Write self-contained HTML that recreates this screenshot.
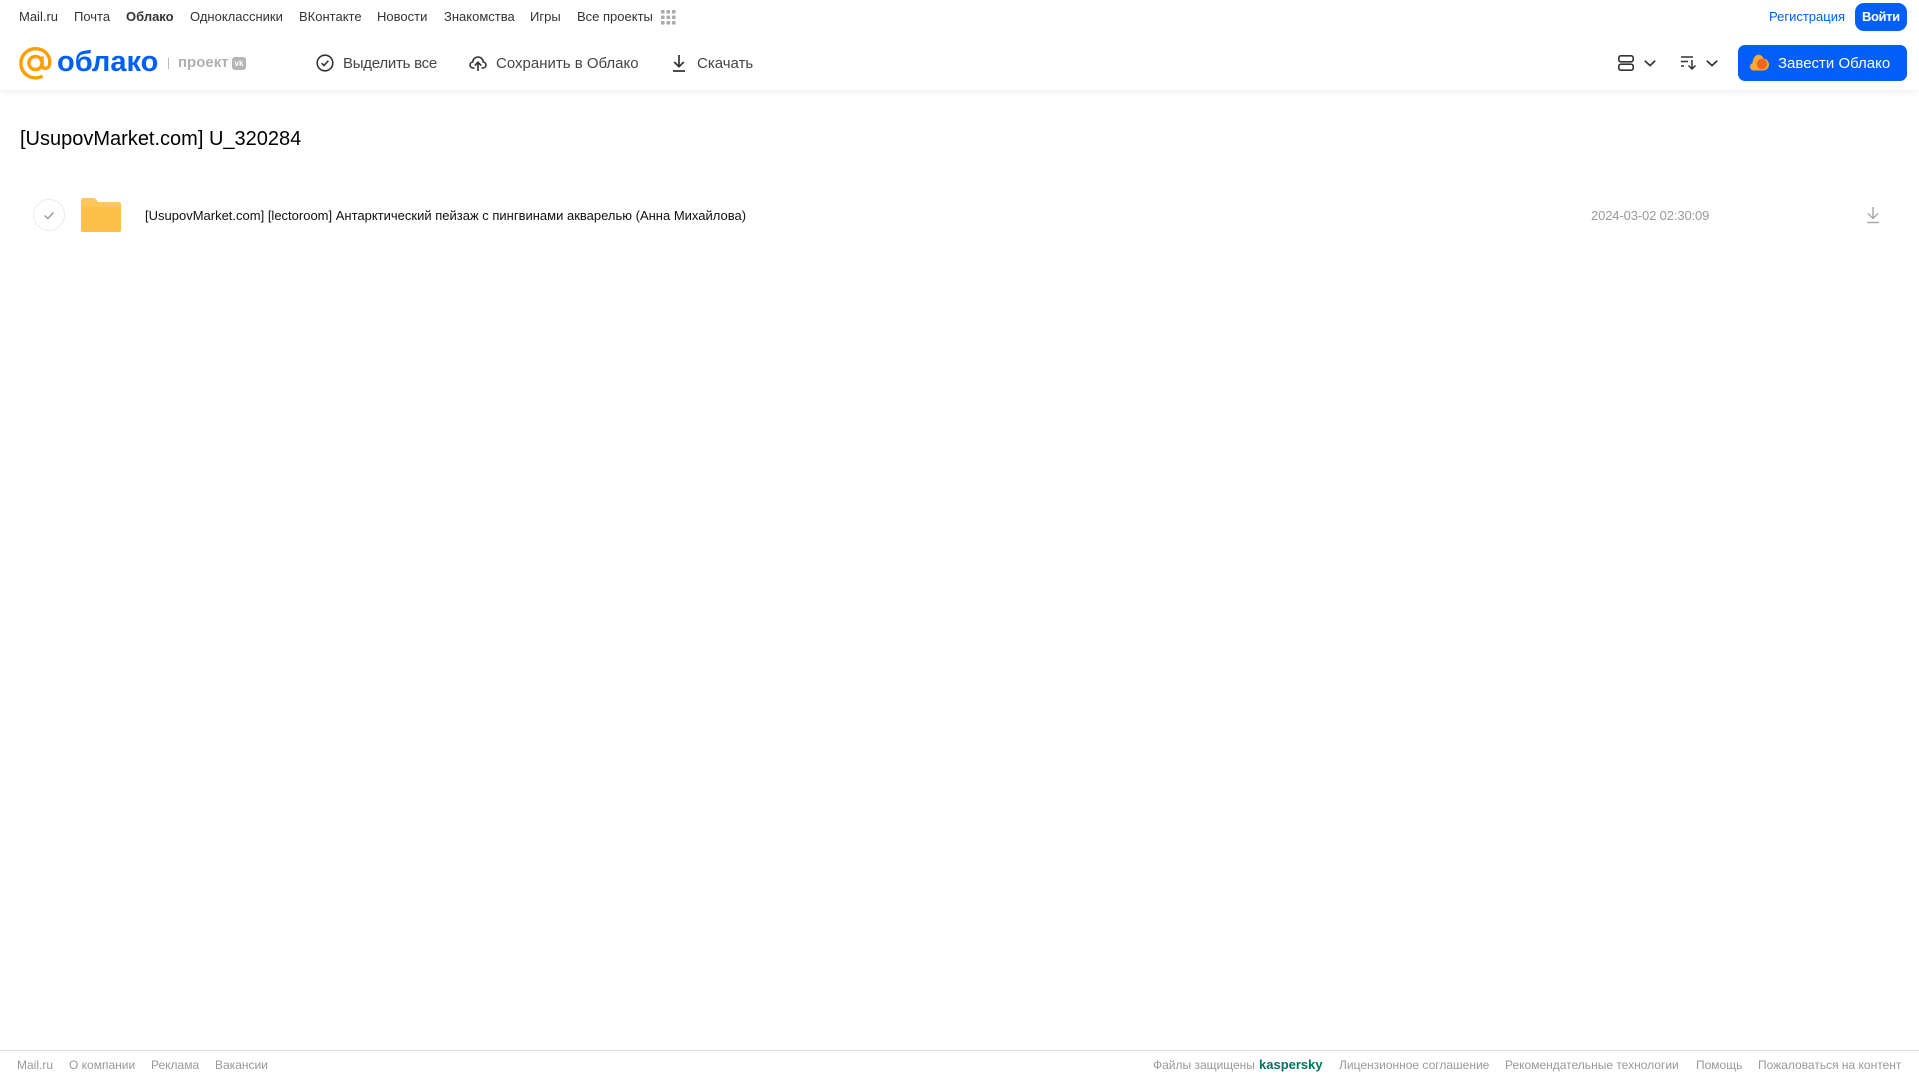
<!DOCTYPE html>
<html lang="ru"><head><meta charset="utf-8"><title>Облако</title>
<style>
html,body{margin:0;padding:0;background:#fff;width:1919px;height:1079px;overflow:hidden;font-family:"Liberation Sans",Arial,sans-serif}
.t{position:absolute;white-space:nowrap;line-height:20px}
.n{top:7px;font-size:13px;color:#333}
.m{top:54px;font-size:15px;color:#444}
.f{top:1055px;font-size:12px;color:#999}
svg{position:absolute;overflow:visible}
#hd{position:absolute;left:0;top:0;width:1919px;height:90px;background:#fff;box-shadow:0 1px 8px rgba(0,0,0,.08)}
</style></head><body>
<div id="hd"></div>
<span class="t n" style="left:19px">Mail.ru</span>
<span class="t n" style="left:74px">Почта</span>
<span class="t n" style="left:126px;font-weight:bold">Облако</span>
<span class="t n" style="left:190px">Одноклассники</span>
<span class="t n" style="left:299px">ВКонтакте</span>
<span class="t n" style="left:377px">Новости</span>
<span class="t n" style="left:444px">Знакомства</span>
<span class="t n" style="left:530px">Игры</span>
<span class="t n" style="left:577px">Все проекты</span>
<svg style="left:661px;top:10px" width="15" height="15" fill="#aaa"><rect x="0" y="0" width="3.6" height="3.6" rx="1"/><rect x="5.5" y="0" width="3.6" height="3.6" rx="1"/><rect x="11" y="0" width="3.6" height="3.6" rx="1"/><rect x="0" y="5.5" width="3.6" height="3.6" rx="1"/><rect x="5.5" y="5.5" width="3.6" height="3.6" rx="1"/><rect x="11" y="5.5" width="3.6" height="3.6" rx="1"/><rect x="0" y="11" width="3.6" height="3.6" rx="1"/><rect x="5.5" y="11" width="3.6" height="3.6" rx="1"/><rect x="11" y="11" width="3.6" height="3.6" rx="1"/></svg>
<span class="t n" style="left:1769px;color:#005ff9">Регистрация</span>
<div style="position:absolute;left:1855px;top:3px;width:52px;height:28px;border-radius:9px;background:#005ff9"></div>
<span class="t n" style="left:1862px;color:#fff;font-weight:bold;letter-spacing:-.4px">Войти</span>

<svg style="left:19px;top:47px" width="33" height="33" viewBox="0 0 33 33" fill="none" stroke="#ff9e00" stroke-width="3.4"><circle cx="16.5" cy="16" r="6.6"/><path d="M23.1 9.5V18.5C23.1 22.5 29.8 22.5 30.6 17.5C31.9 8.5 25.5 1.7 16.5 1.7C8.5 1.7 1.9 8.2 1.9 16.2C1.9 24.5 8.5 30.9 16.5 30.9C19.4 30.9 21.6 30.2 23.5 29"/></svg>
<span class="t" style="left:57px;top:44px;font-size:29px;line-height:36px;font-weight:bold;color:#005ff9">облако</span>
<div style="position:absolute;left:168px;top:58px;width:1px;height:11px;background:#bbb"></div>
<span class="t" style="left:178px;top:53px;font-size:15px;font-weight:bold;color:#b0b0b0">проект</span>
<div style="position:absolute;left:232px;top:57px;width:14px;height:13px;border-radius:3px;background:#b5b5b5;color:#fff;font:bold 8px/13px 'Liberation Sans',sans-serif;text-align:center">vk</div>

<svg style="left:316px;top:54px" width="18" height="18" viewBox="0 0 18 18" fill="none" stroke="#333" stroke-width="1.6"><circle cx="9" cy="9" r="7.8"/><path d="M5.6 9.2L8 11.5L12.4 6.7"/></svg>
<span class="t m" style="left:343px;letter-spacing:-.25px">Выделить все</span>
<svg style="left:469px;top:54px" width="18" height="18" viewBox="0 0 18 18" fill="none" stroke="#333" stroke-width="1.6"><path d="M5.5 14H4.2C2.3 14 1 12.6 1 11C1 9.4 2.1 8.2 3.7 8C4 5 6.300 3 9 3C11.700 3 14 5 14.300 8C15.900 8.200 17 9.400 17 11C17 12.600 15.700 14 13.800 14H12.500"/><path d="M9 17V8.500M5.800 11.500L9 8.300L12.200 11.500"/></svg>
<span class="t m" style="left:496px">Сохранить в Облако</span>
<svg style="left:670px;top:54px" width="18" height="18" viewBox="0 0 18 18" fill="none" stroke="#333" stroke-width="1.7"><path d="M9 1V12.500M4.200 8L9 12.700L13.800 8M3 17H15"/></svg>
<span class="t m" style="left:697px">Скачать</span>

<svg style="left:1618px;top:55px" width="16" height="16" viewBox="0 0 16 16" fill="none" stroke="#333" stroke-width="1.6"><rect x=".8" y=".8" width="14.400" height="6" rx="2"/><rect x=".8" y="9.200" width="14.400" height="6" rx="2"/></svg>
<svg style="left:1644px;top:60px" width="12" height="7" viewBox="0 0 12 7" fill="none" stroke="#333" stroke-width="1.7"><path d="M.8 .8L6 5.600L11.200 .8"/></svg>
<svg style="left:1681px;top:56px" width="16" height="14" viewBox="0 0 16 14" fill="none" stroke="#333" stroke-width="1.5"><path d="M0 1H12M0 5.500H7M0 10H3M11 4V13M7.500 9.500L11 13L14.500 9.500"/></svg>
<svg style="left:1706px;top:60px" width="12" height="7" viewBox="0 0 12 7" fill="none" stroke="#333" stroke-width="1.7"><path d="M.8 .8L6 5.600L11.200 .8"/></svg>
<div style="position:absolute;left:1738px;top:45px;width:169px;height:36px;border-radius:7px;background:#005ff9"></div>
<svg style="left:1750px;top:54px" width="19" height="17" viewBox="0 0 19 17"><path d="M4 16.500C1.700 16.500 0 14.800 0 12.700C0 11 1 9.600 2.600 9C2.700 4.500 5.300 .8 8.500 .8C11 .8 12.800 2.500 13.400 4.500C16.500 4.800 19 7.300 19 10.500C19 14 16.200 16.500 13 16.500Z" fill="#ffa930"/><circle cx="12" cy="10" r="5.200" fill="#f0651f"/></svg>
<span class="t m" style="left:1778px;color:#fff">Завести Облако</span>

<span class="t" style="left:20px;top:127px;font-size:20px;line-height:24px;color:#000">[UsupovMarket.com] U_320284</span>

<svg style="left:33px;top:199px" width="32" height="32" viewBox="0 0 32 32" fill="none"><circle cx="16" cy="16" r="15.500" stroke="#ececec"/><path d="M11.500 16.500L14.800 19.500L20.500 13.500" stroke="#999" stroke-width="1.500"/></svg>
<svg style="left:81px;top:198px" width="40" height="34" viewBox="0 0 40 34"><path d="M2 0H12C14 0 15 1 16 2.500L17 4H38C39.200 4 40 4.800 40 6V32C40 33.200 39.200 34 38 34H2C.8 34 0 33.200 0 32V2C0 .8 .8 0 2 0Z" fill="#ffc759"/><path d="M0 8.500H40V32C40 33.200 39.200 34 38 34H2C.8 34 0 33.200 0 32Z" fill="#ffc04a"/></svg>
<span class="t" style="left:145px;top:206px;font-size:13px;color:#111">[UsupovMarket.com] [lectoroom] Антарктический пейзаж с пингвинами акварелью (Анна Михайлова)</span>
<span class="t" style="left:1591px;top:206px;font-size:13px;color:#999;letter-spacing:-.13px">2024-03-02 02:30:09</span>
<svg style="left:1866px;top:206px" width="14" height="18" viewBox="0 0 14 18" fill="none" stroke="#aaa" stroke-width="1.500"><path d="M7 1V12M2 7.500L7 12.500L12 7.500M1 16.500H13"/></svg>

<div style="position:absolute;left:0;top:1050px;width:1919px;height:1px;background:#ddd"></div>
<span class="t f" style="left:17px">Mail.ru</span>
<span class="t f" style="left:69px">О компании</span>
<span class="t f" style="left:151px">Реклама</span>
<span class="t f" style="left:215px">Вакансии</span>
<span class="t f" style="left:1153px">Файлы защищены</span>
<span class="t f" style="left:1259px;font-size:13px;font-weight:bold;color:#00745f">kaspersky</span>
<span class="t f" style="left:1339px">Лицензионное соглашение</span>
<span class="t f" style="left:1505px">Рекомендательные технологии</span>
<span class="t f" style="left:1696px">Помощь</span>
<span class="t f" style="left:1758px">Пожаловаться на контент</span>
</body></html>
